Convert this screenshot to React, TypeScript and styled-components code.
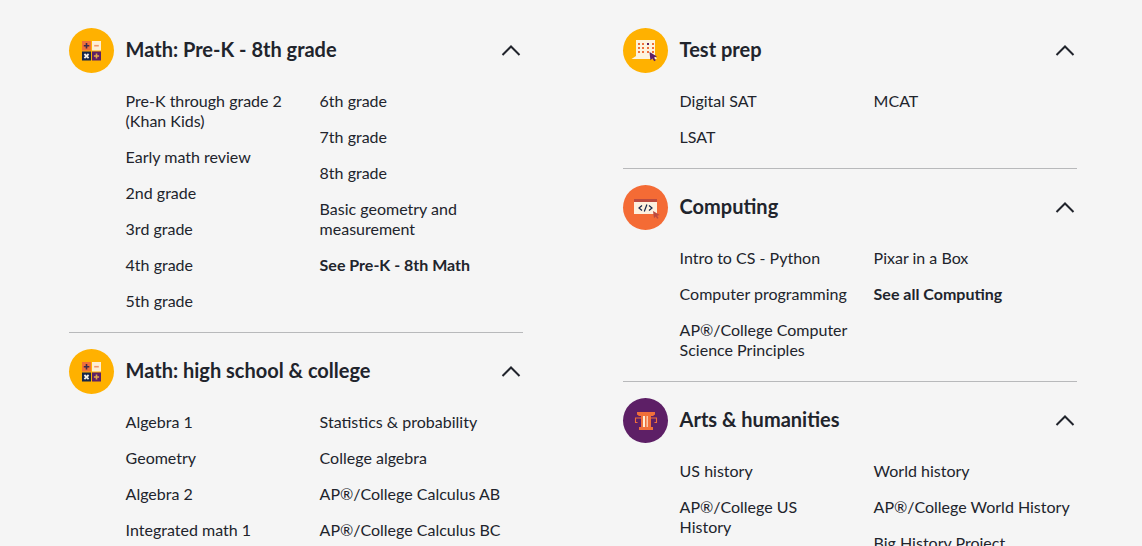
import type { ReactNode } from 'react';
import styled, { createGlobalStyle } from 'styled-components';

const GlobalStyle = createGlobalStyle`
	html, body {
		margin: 0;
		height: 546px;
		overflow: hidden;
		background: #f5f5f5;
	}
	body {
		font-family: Lato, 'Open Sans', sans-serif;
		color: #21242c;
	}
`;

const Page = styled.div`
	display: grid;
	grid-template-columns: 454px 454px;
	column-gap: 100px;
	padding: 28px 0 0 69px;
`;

const Column = styled.div`
	display: flex;
	flex-direction: column;
`;

const Section = styled.section`
	padding-bottom: 21px;
	margin-bottom: 16px;
	border-bottom: 1px solid #b8b9bb;
	&:last-child {
		border-bottom: none;
	}
`;

const Header = styled.div`
	display: flex;
	align-items: center;
	gap: 11.6px;
	height: 45px;
	margin-bottom: 18px;
`;

const Badge = styled.div<{ $bg: string }>`
	width: 45px;
	height: 45px;
	flex: none;
	border-radius: 50%;
	background: ${(p) => p.$bg};
	display: flex;
	align-items: center;
	justify-content: center;
`;

const Title = styled.h2`
	flex: 1;
	margin: 0 0 3px;
	font-size: 20px;
	line-height: 24px;
	font-weight: 700;
`;

const Chevron = styled.svg`
	width: 24px;
	height: 24px;
	flex: none;
	margin-bottom: 2px;
`;

const Links = styled.div`
	display: grid;
	grid-template-columns: 170px 203px;
	column-gap: 24px;
	margin-left: 56.6px;
`;

const LinkColumn = styled.div`
	display: flex;
	flex-direction: column;
	gap: 16px;
`;

const LinkItem = styled.a<{ $strong?: boolean }>`
	display: block;
	font-size: 16px;
	line-height: 20px;
	font-weight: ${(p) => (p.$strong ? 700 : 400)};
	color: #21242c;
`;

const MathIcon = () => (
	<svg width="45" height="45" viewBox="0 0 45 45">
		<rect x="13" y="13" width="9" height="9.5" fill="#f0703a" />
		<rect x="23" y="13" width="9" height="9.5" fill="#fdeed6" />
		<rect x="13" y="23.5" width="9" height="9" fill="#14264a" />
		<rect x="23" y="23.5" width="9" height="9" fill="#5d1f66" />
		<path d="M17.5 15v5.5M14.8 17.7h5.5" stroke="#3b2b4f" strokeWidth="1.6" />
		<path d="M25.2 17.7h4.6" stroke="#f0956a" strokeWidth="1.6" />
		<path d="M15.4 26l4.2 4.2M19.6 26l-4.2 4.2" stroke="#f4efe6" strokeWidth="1.8" />
		<path d="M27.5 25.4v5.2M24.9 28h5.2" stroke="#e3a64a" strokeWidth="1.6" />
	</svg>
);

const PrepDots = [16, 20, 25, 30].flatMap((x, i) =>
	[16, 20, 24].map((y, j) => ({ x, y, c: i === 2 && j === 0 ? '#5d1f66' : '#f0703a' }))
);

const PrepIcon = () => (
	<svg width="45" height="45" viewBox="0 0 45 45">
		<rect x="13" y="12" width="19" height="16" fill="#fdf3dd" />
		<path d="M13 28h19l2 3H8.5z" fill="#fdf3dd" />
		{PrepDots.map((d, i) => (
			<rect key={i} x={d.x - 1} y={d.y - 1} width="2" height="2" fill={d.c} />
		))}
		<path d="M26.5 24l7.5 4.6-3 .8 1.8 2.8-1.6 1-1.8-2.8-2 1.8z" fill="#5d1f66" />
	</svg>
);

const CodeIcon = () => (
	<svg width="45" height="45" viewBox="0 0 45 45">
		<rect x="11" y="14" width="23" height="15" fill="#fdf0de" />
		<rect x="11" y="14" width="23" height="3" fill="#bb4a3f" />
		<path d="M19 20.5l-3 2.5 3 2.5M26 20.5l3 2.5-3 2.5" fill="none" stroke="#14264a" strokeWidth="1.2" />
		<path d="M23.9 19.5l-2.6 7" stroke="#14264a" strokeWidth="1.2" />
		<path d="M30 26l6.8 4-2.7.7 1.5 2.2-1.4.9-1.5-2.2-1.7 1.6z" fill="#bb4a3f" />
	</svg>
);

const ArtsIcon = () => (
	<svg width="45" height="45" viewBox="0 0 45 45">
		<path d="M14 14h18v2.5l-2 1.5H16l-2-1.500z" fill="#f0703a" />
		<rect x="18" y="18" width="10" height="11" fill="#f0703a" />
		<rect x="20" y="18" width="2" height="11" fill="#fdeed6" />
		<rect x="23.500" y="18" width="1.500" height="11" fill="#f8c9ac" />
		<rect x="16" y="29" width="14" height="3" fill="#f0703a" />
		<path d="M18 20h-5.500v4.500h2M28 20h5.500v4.500h-2" fill="none" stroke="#f0703a" strokeWidth="1.100" />
	</svg>
);

type LinkData = { label: string; strong?: boolean };

type TopicProps = {
	title: string;
	color: string;
	icon: ReactNode;
	left: LinkData[];
	right: LinkData[];
};

function Topic({ title, color, icon, left, right }: TopicProps) {
	return (
		<Section>
			<Header>
				<Badge $bg={color}>{icon}</Badge>
				<Title>{title}</Title>
				<Chevron viewBox="0 0 24 24">
					<path d="M3.500 17L12 8.500 20.500 17" fill="none" stroke="#21242c" strokeWidth="2" />
				</Chevron>
			</Header>
			<Links>
				{[left, right].map((col, i) => (
					<LinkColumn key={i}>
						{col.map((l) => (
							<LinkItem key={l.label} $strong={l.strong}>
								{l.label}
							</LinkItem>
						))}
					</LinkColumn>
				))}
			</Links>
		</Section>
	);
}

const items = (...labels: string[]): LinkData[] => labels.map((label) => ({ label }));

export default function App() {
	return (
		<Page>
			<GlobalStyle />
			<Column>
				<Topic
					title="Math: Pre-K - 8th grade"
					color="#ffb100"
					icon={<MathIcon />}
					left={items(
						'Pre-K through grade 2 (Khan Kids)',
						'Early math review',
						'2nd grade',
						'3rd grade',
						'4th grade',
						'5th grade'
					)}
					right={[
						...items('6th grade', '7th grade', '8th grade', 'Basic geometry and measurement'),
						{ label: 'See Pre-K - 8th Math', strong: true },
					]}
				/>
				<Topic
					title="Math: high school & college"
					color="#ffb100"
					icon={<MathIcon />}
					left={items('Algebra 1', 'Geometry', 'Algebra 2', 'Integrated math 1')}
					right={items(
						'Statistics & probability',
						'College algebra',
						'AP®/College Calculus AB',
						'AP®/College Calculus BC'
					)}
				/>
			</Column>
			<Column>
				<Topic
					title="Test prep"
					color="#ffb100"
					icon={<PrepIcon />}
					left={items('Digital SAT', 'LSAT')}
					right={items('MCAT')}
				/>
				<Topic
					title="Computing"
					color="#f46b35"
					icon={<CodeIcon />}
					left={items(
						'Intro to CS - Python',
						'Computer programming',
						'AP®/College Computer Science Principles'
					)}
					right={[...items('Pixar in a Box'), { label: 'See all Computing', strong: true }]}
				/>
				<Topic
					title="Arts & humanities"
					color="#5d1f66"
					icon={<ArtsIcon />}
					left={items('US history', 'AP®/College US History')}
					right={items('World history', 'AP®/College World History', 'Big History Project')}
				/>
			</Column>
		</Page>
	);
}
